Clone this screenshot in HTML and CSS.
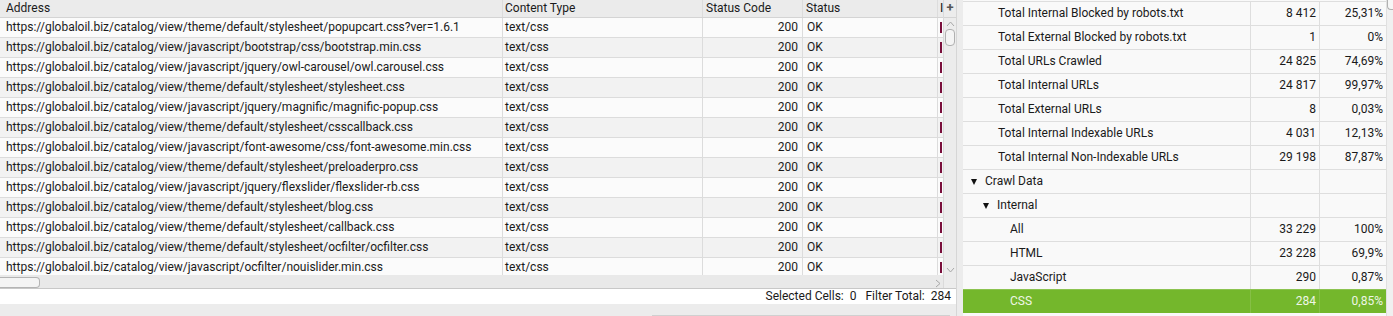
FILE: index.html
```html
<!DOCTYPE html>
<html lang="en">
<head>
    <meta charset="UTF-8">
    <link rel="stylesheet" href="styles.css">
</head>
<body>

<div class="left-pane">
    <div class="view">
        <div class="table-col">
            <div class="grid">
                <div class="row head">
                    <div class="cell c-addr">Address</div>
                    <div class="cell c-type">Content Type</div>
                    <div class="cell c-code">Status Code</div>
                    <div class="cell c-status">Status</div>
                    <div class="cell c-idx"><span class="cut">I</span></div>
                </div>
                <div class="row">
                    <div class="cell c-addr">https://globaloil.biz/catalog/view/theme/default/stylesheet/popupcart.css?ver=1.6.1</div>
                    <div class="cell c-type">text/css</div><div class="cell c-code">200</div><div class="cell c-status">OK</div><div class="cell c-idx"><span class="mark"></span></div>
                </div>
                <div class="row">
                    <div class="cell c-addr">https://globaloil.biz/catalog/view/javascript/bootstrap/css/bootstrap.min.css</div>
                    <div class="cell c-type">text/css</div><div class="cell c-code">200</div><div class="cell c-status">OK</div><div class="cell c-idx"><span class="mark"></span></div>
                </div>
                <div class="row">
                    <div class="cell c-addr">https://globaloil.biz/catalog/view/javascript/jquery/owl-carousel/owl.carousel.css</div>
                    <div class="cell c-type">text/css</div><div class="cell c-code">200</div><div class="cell c-status">OK</div><div class="cell c-idx"><span class="mark"></span></div>
                </div>
                <div class="row">
                    <div class="cell c-addr">https://globaloil.biz/catalog/view/theme/default/stylesheet/stylesheet.css</div>
                    <div class="cell c-type">text/css</div><div class="cell c-code">200</div><div class="cell c-status">OK</div><div class="cell c-idx"><span class="mark"></span></div>
                </div>
                <div class="row">
                    <div class="cell c-addr">https://globaloil.biz/catalog/view/javascript/jquery/magnific/magnific-popup.css</div>
                    <div class="cell c-type">text/css</div><div class="cell c-code">200</div><div class="cell c-status">OK</div><div class="cell c-idx"><span class="mark"></span></div>
                </div>
                <div class="row">
                    <div class="cell c-addr">https://globaloil.biz/catalog/view/theme/default/stylesheet/csscallback.css</div>
                    <div class="cell c-type">text/css</div><div class="cell c-code">200</div><div class="cell c-status">OK</div><div class="cell c-idx"><span class="mark"></span></div>
                </div>
                <div class="row">
                    <div class="cell c-addr">https://globaloil.biz/catalog/view/javascript/font-awesome/css/font-awesome.min.css</div>
                    <div class="cell c-type">text/css</div><div class="cell c-code">200</div><div class="cell c-status">OK</div><div class="cell c-idx"><span class="mark"></span></div>
                </div>
                <div class="row">
                    <div class="cell c-addr">https://globaloil.biz/catalog/view/theme/default/stylesheet/preloaderpro.css</div>
                    <div class="cell c-type">text/css</div><div class="cell c-code">200</div><div class="cell c-status">OK</div><div class="cell c-idx"><span class="mark"></span></div>
                </div>
                <div class="row">
                    <div class="cell c-addr">https://globaloil.biz/catalog/view/javascript/jquery/flexslider/flexslider-rb.css</div>
                    <div class="cell c-type">text/css</div><div class="cell c-code">200</div><div class="cell c-status">OK</div><div class="cell c-idx"><span class="mark"></span></div>
                </div>
                <div class="row">
                    <div class="cell c-addr">https://globaloil.biz/catalog/view/theme/default/stylesheet/blog.css</div>
                    <div class="cell c-type">text/css</div><div class="cell c-code">200</div><div class="cell c-status">OK</div><div class="cell c-idx"><span class="mark"></span></div>
                </div>
                <div class="row">
                    <div class="cell c-addr">https://globaloil.biz/catalog/view/theme/default/stylesheet/callback.css</div>
                    <div class="cell c-type">text/css</div><div class="cell c-code">200</div><div class="cell c-status">OK</div><div class="cell c-idx"><span class="mark"></span></div>
                </div>
                <div class="row">
                    <div class="cell c-addr">https://globaloil.biz/catalog/view/theme/default/stylesheet/ocfilter/ocfilter.css</div>
                    <div class="cell c-type">text/css</div><div class="cell c-code">200</div><div class="cell c-status">OK</div><div class="cell c-idx"><span class="mark"></span></div>
                </div>
                <div class="row">
                    <div class="cell c-addr">https://globaloil.biz/catalog/view/javascript/ocfilter/nouislider.min.css</div>
                    <div class="cell c-type">text/css</div><div class="cell c-code">200</div><div class="cell c-status">OK</div><div class="cell c-idx"><span class="mark"></span></div>
                </div>
            </div>
            <div class="hscroll">
                <div class="hthumb"></div>
                <svg class="arrow-right" width="6" height="9" viewBox="0 0 6 9"><path d="M1 1 L5 4.5 L1 8" fill="none" stroke="#a8a8a8" stroke-width="1"/></svg>
            </div>
        </div>
        <div class="vscroll">
            <div class="plus">+</div>
            <svg class="arrow-up" width="9" height="6" viewBox="0 0 9 6"><path d="M1 5 L4.5 1 L8 5" fill="none" stroke="#a8a8a8" stroke-width="1"/></svg>
            <div class="vthumb"></div>
            <div class="spacer"></div>
            <svg class="arrow-down" width="9" height="6" viewBox="0 0 9 6"><path d="M1 1 L4.5 5 L8 1" fill="none" stroke="#a8a8a8" stroke-width="1"/></svg>
        </div>
    </div>
    <div class="status-bar">
        <span>Selected Cells:</span><span class="val">0</span>
        <span class="gap">Filter Total:</span><span class="val">284</span>
    </div>
    <div class="foot"><div class="foot-box"></div></div>
</div>

<div class="gutter"></div>

<div class="right-pane">
    <div class="tree">
        <div class="trow lvl1"><div class="tlabel">Total Internal Blocked by robots.txt</div><div class="tnum">8 412</div><div class="tpct">25,31%</div></div>
        <div class="trow lvl1"><div class="tlabel">Total External Blocked by robots.txt</div><div class="tnum">1</div><div class="tpct">0%</div></div>
        <div class="trow lvl1"><div class="tlabel">Total URLs Crawled</div><div class="tnum">24 825</div><div class="tpct">74,69%</div></div>
        <div class="trow lvl1"><div class="tlabel">Total Internal URLs</div><div class="tnum">24 817</div><div class="tpct">99,97%</div></div>
        <div class="trow lvl1"><div class="tlabel">Total External URLs</div><div class="tnum">8</div><div class="tpct">0,03%</div></div>
        <div class="trow lvl1"><div class="tlabel">Total Internal Indexable URLs</div><div class="tnum">4 031</div><div class="tpct">12,13%</div></div>
        <div class="trow lvl1"><div class="tlabel">Total Internal Non-Indexable URLs</div><div class="tnum">29 198</div><div class="tpct">87,87%</div></div>
        <div class="trow lvl0 open"><div class="tlabel"><span class="tri"></span>Crawl Data</div><div class="tnum"></div><div class="tpct"></div></div>
        <div class="trow lvl1 open"><div class="tlabel"><span class="tri"></span>Internal</div><div class="tnum"></div><div class="tpct"></div></div>
        <div class="trow lvl2"><div class="tlabel">All</div><div class="tnum">33 229</div><div class="tpct">100%</div></div>
        <div class="trow lvl2"><div class="tlabel">HTML</div><div class="tnum">23 228</div><div class="tpct">69,9%</div></div>
        <div class="trow lvl2"><div class="tlabel">JavaScript</div><div class="tnum">290</div><div class="tpct">0,87%</div></div>
        <div class="trow lvl2 selected"><div class="tlabel">CSS</div><div class="tnum">284</div><div class="tpct">0,85%</div></div>
    </div>
    <div class="rscroll">
        <div class="rthumb"></div>
    </div>
</div>

</body>
</html>
```

FILE: styles.css
```css
* {
    box-sizing: border-box;
}
body {
    margin: 0;
    width: 1393px;
    height: 316px;
    overflow: hidden;
    display: flex;
    background: #ececec;
    font-family: Roboto, "Liberation Sans", sans-serif;
    font-size: 12px;
    color: #1a1a1a;
}
.left-pane {
    width: 957px;
    flex-shrink: 0;
    border-right: 1px solid #d6d6d6;
    display: flex;
    flex-direction: column;
}
.view {
    display: flex;
    height: 289px;
    border-bottom: 1px solid #c8c8c8;
}
.table-col {
    width: 943px;
    display: flex;
    flex-direction: column;
}
.grid {
    height: 275px;
    overflow: hidden;
    background: #fff;
}
.row {
    display: flex;
    height: 20px;
    line-height: 19px;
    border-bottom: 1px solid #dcdcdc;
    background: #fbfbfb;
}
.row:nth-child(odd) {
    background: #f2f2f2;
}
.row.head {
    height: 18px;
    line-height: 17px;
    background: #ebebeb;
    border-bottom: 1px solid #d4d4d4;
}
.cell {
    white-space: nowrap;
    overflow: hidden;
    border-right: 1px solid #dcdcdc;
}
.c-addr {
    width: 503px;
    padding-left: 6px;
}
.c-type {
    width: 200px;
    padding-left: 2px;
}
.c-code {
    width: 100px;
    text-align: right;
    padding-right: 4px;
}
.c-status {
    width: 135px;
    padding-left: 4px;
}
.head .c-code, .head .c-status {
    text-align: left;
    padding-left: 3px;
}
.c-idx {
    width: 5px;
    border-right: none;
    padding-left: 2px;
}
.cut {
    color: #111;
}
.mark {
    display: inline-block;
    width: 2px;
    height: 11px;
    background: #7a0f3c;
    vertical-align: -2px;
}
.hscroll {
    height: 13px;
    background: #e9e9e9;
    display: flex;
    align-items: center;
    justify-content: space-between;
}
.hthumb {
    width: 40px;
    height: 11px;
    border: 1px solid #b4b4b4;
    border-left: none;
    border-radius: 0 4px 4px 0;
    background: #f4f4f4;
    margin-top: 1px;
}
.arrow-right {
    margin-right: 2px;
    margin-top: 3px;
}
.vscroll {
    width: 13px;
    background: #ececec;
    border-left: 1px solid #dadada;
    display: flex;
    flex-direction: column;
    align-items: center;
}
.plus {
    height: 18px;
    line-height: 15px;
    width: 100%;
    text-align: center;
    font-weight: bold;
    font-size: 13px;
    color: #555;
    border-bottom: 1px solid #d4d4d4;
}
.arrow-up {
    margin-top: 3px;
}
.vthumb {
    width: 10px;
    height: 17px;
    border: 1px solid #b0b0b0;
    border-radius: 4px;
    background: #f4f4f4;
    margin-top: 2px;
}
.spacer {
    flex: 1;
}
.arrow-down {
    margin-bottom: 15px;
}
.status-bar {
    height: 15px;
    line-height: 15px;
    background: #fff;
    text-align: right;
    padding-right: 5px;
    white-space: nowrap;
}
.status-bar .val {
    margin-left: 6px;
}
.status-bar .gap {
    margin-left: 6px;
}
.foot {
    flex: 1;
    background: #ececec;
    position: relative;
}
.foot-box {
    position: absolute;
    left: 652px;
    right: 6px;
    bottom: -4px;
    height: 5px;
    border-top: 1px solid #d0d0d0;
    background: #f6f6f6;
}
.gutter {
    width: 6px;
    flex-shrink: 0;
    background: #ececec;
}
.right-pane {
    width: 430px;
    flex-shrink: 0;
    display: flex;
    background: #f9f9f9;
}
.tree {
    width: 423px;
    padding-top: 1px;
}
.trow {
    display: flex;
    height: 24px;
    line-height: 23px;
    border-top: 1px solid #dedede;
    white-space: nowrap;
}
.tlabel {
    width: 288px;
    border-right: 1px solid #dedede;
    display: flex;
    align-items: center;
}
.lvl0 .tlabel {
    padding-left: 23px;
}
.lvl1 .tlabel {
    padding-left: 35px;
}
.lvl2 .tlabel {
    padding-left: 47px;
}
.open .tlabel {
    padding-left: 0;
}
.lvl0.open .tlabel {
    padding-left: 8px;
}
.lvl1.open .tlabel {
    padding-left: 20px;
}
.tri {
    width: 0;
    height: 0;
    border-left: 3.5px solid transparent;
    border-right: 3.5px solid transparent;
    border-top: 6px solid #111;
    margin-right: 8px;
}
.tnum {
    width: 69px;
    text-align: right;
    padding-right: 3px;
    border-right: 1px solid #dedede;
}
.tpct {
    width: 66px;
    text-align: right;
    padding-right: 3px;
}
.selected {
    background: #74b72c;
    color: #eef6e6;
    border-top-color: #8cc350;
}
.selected .tlabel, .selected .tnum {
    border-right-color: #86bf46;
}
.rscroll {
    width: 7px;
    border-left: 1px solid #e0e0e0;
    background: #f0f0f0;
}
.rthumb {
    height: 10px;
    border: 1px solid #b0b0b0;
    border-right: none;
    border-top: none;
    border-radius: 0 0 0 4px;
    background: #f6f6f6;
}
```
